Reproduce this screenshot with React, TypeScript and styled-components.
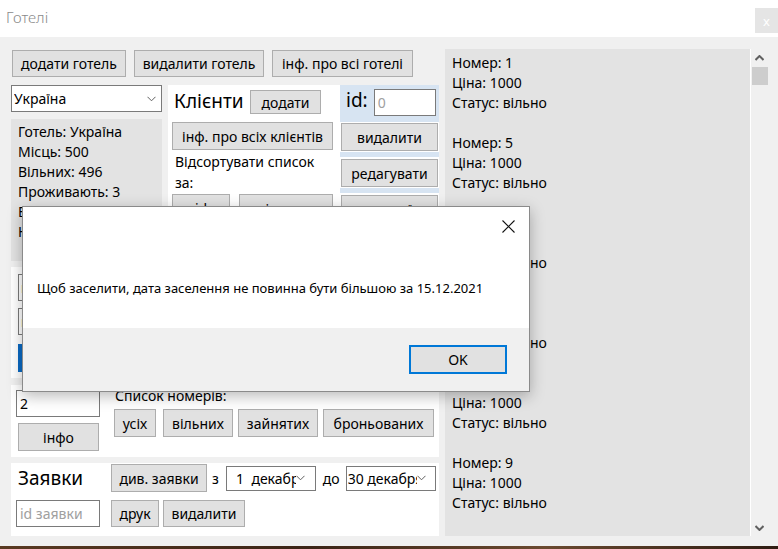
import React from "react";
import styled, { createGlobalStyle } from "styled-components";

const Global = createGlobalStyle`
  html, body { margin: 0; padding: 0; background: #f0f0f0; }
  body { font-family: "Noto Sans", "Open Sans", sans-serif; }
  * { box-sizing: border-box; }
`;

const Window = styled.div`
  position: relative;
  width: 778px;
  height: 549px;
  overflow: hidden;
  display: flex;
  flex-direction: column;
  background: #f0f0f0;
  color: #000;
  font-family: "Noto Sans", "Open Sans", sans-serif;
  font-size: 14px;
`;

const TitleBar = styled.div`
  height: 37px;
  flex-shrink: 0;
  background: #fff;
  display: flex;
  justify-content: space-between;
  align-items: flex-start;
`;

const Title = styled.div`
  padding: 7px 0 0 6px;
  font-size: 15px;
  font-weight: 300;
  color: #8a8a8a;
`;

const CloseBox = styled.div`
  margin-top: 8px;
  width: 23px;
  height: 25px;
  background: #e5e5e5;
  color: #fff;
  font-size: 13px;
  display: flex;
  align-items: center;
  justify-content: center;
`;

const Body = styled.div`
  flex: 1;
  display: flex;
  gap: 6px;
  padding-left: 11px;
  min-height: 0;
`;

const LeftCol = styled.div`
  width: 428px;
  display: flex;
  flex-direction: column;
  padding-top: 13px;
`;

const Toolbar = styled.div`
  display: flex;
  gap: 8px;
  padding-left: 1px;
  height: 27px;
`;

const Btn = styled.button<{ $w?: number; $h?: number; $ml?: number }>`
  width: ${(p) => (p.$w ? `${p.$w}px` : "auto")};
  height: ${(p) => p.$h ?? 28}px;
  margin-left: ${(p) => p.$ml ?? 0}px;
  padding: 0 6px;
  background: #e1e1e1;
  border: 1px solid #adadad;
  font-family: inherit;
  font-size: 14px;
  color: #000;
  white-space: nowrap;
  overflow: hidden;
  flex-shrink: 0;
`;

const MidRow = styled.div`
  margin-top: 8px;
  display: flex;
  gap: 6px;
  height: 176px;
`;

const HotelCol = styled.div`
  width: 151px;
  display: flex;
  flex-direction: column;
  gap: 7px;
`;

const Combo = styled.div<{ $w: number; $h?: number; $pad?: number }>`
  width: ${(p) => p.$w}px;
  height: ${(p) => p.$h ?? 27}px;
  background: #fff;
  border: 1px solid #7a7a7a;
  display: flex;
  align-items: center;
  padding-left: ${(p) => p.$pad ?? 2}px;
  font-size: 14px;
  white-space: pre;
  overflow: hidden;
  flex-shrink: 0;
`;

const ComboText = styled.span`
  flex: 1;
  overflow: hidden;
`;

const ChevronBox = styled.span<{ $w?: number }>`
  width: ${(p) => p.$w ?? 17}px;
  flex-shrink: 0;
  display: flex;
  align-items: center;
  justify-content: flex-start;
`;

const GrayInfo = styled.div`
  flex: 1;
  background: #e3e3e3;
  padding: 3px 7px;
  line-height: 20px;
  font-size: 14px;
  overflow: hidden;
`;

const ClientsPanel = styled.div`
  width: 271px;
  background: #fff;
  display: flex;
`;

const ClientsMain = styled.div`
  width: 172px;
  display: flex;
  flex-direction: column;
  padding-left: 4px;
`;

const HeaderRow = styled.div`
  height: 37px;
  display: flex;
  align-items: flex-start;
`;

const BigLabel = styled.span<{ $pt?: number; $w?: number }>`
  font-size: 19px;
  line-height: 28px;
  width: ${(p) => (p.$w ? `${p.$w}px` : "auto")};
  padding-top: ${(p) => p.$pt ?? 2}px;
  padding-left: 2px;
  flex-shrink: 0;
`;

const HeaderBtnWrap = styled.div`
  padding-top: 5px;
`;

const SortText = styled.div`
  width: 160px;
  padding: 0 0 0 3px;
  margin-top: 1px;
  line-height: 21px;
  font-size: 14px;
  height: 43px;
`;

const BtnRow = styled.div<{ $gap?: number }>`
  display: flex;
  gap: ${(p) => p.$gap ?? 9}px;
`;

const IdCol = styled.div`
  width: 99px;
  display: flex;
  flex-direction: column;
`;

const IdRow = styled.div`
  height: 37px;
  background: #d7e4f2;
  display: flex;
  align-items: flex-start;
  gap: 6px;
  padding: 0 0 0 4px;
`;

const IdInputWrap = styled.div`
  padding-top: 4px;
`;

const Input = styled.div<{ $w: number; $h?: number; $ph?: boolean }>`
  width: ${(p) => p.$w}px;
  height: ${(p) => p.$h ?? 27}px;
  background: #fff;
  border: 1px solid #7a7a7a;
  padding-left: 3px;
  display: flex;
  align-items: center;
  font-size: 14px;
  color: ${(p) => (p.$ph ? "#a0a0a0" : "#000")};
  flex-shrink: 0;
`;

const Strip = styled.div`
  height: 5px;
  margin: 1px 0 1px;
  background: #d7e4f2;
`;

const IdBtnWrap = styled.div`
  padding-left: 1px;
  margin-top: 1px;
`;

const Panel = styled.div<{ $h: number; $mt: number }>`
  height: ${(p) => p.$h}px;
  margin-top: ${(p) => p.$mt}px;
  background: #fff;
  display: flex;
  flex-shrink: 0;
`;

const SettleCol = styled.div`
  display: flex;
  flex-direction: column;
  gap: 7px;
  padding: 7px 0 0 7px;
`;

const SettleRight = styled.div`
  display: flex;
  flex-direction: column;
  gap: 7px;
  padding: 7px 0 0 12px;
  font-size: 14px;
`;

const BlueBtn = styled.div`
  width: 82px;
  height: 28px;
  margin-top: 2px;
  background: #0a6ac4;
  color: #fff;
  font-size: 14px;
  display: flex;
  align-items: center;
  justify-content: center;
`;

const RoomLeft = styled.div`
  display: flex;
  flex-direction: column;
  gap: 6px;
  padding: 5px 0 0 5px;
  width: 100px;
`;

const RoomRight = styled.div`
  display: flex;
  flex-direction: column;
  padding: 1px 0 0 3px;
`;

const SmallLabel = styled.div`
  font-size: 14px;
  line-height: 20px;
  height: 23px;
  padding-left: 1px;
`;

const OrdersPanel = styled.div`
  display: flex;
  flex-direction: column;
  padding: 1px 0 0 5px;
  gap: 8px;
`;

const OrdersRow = styled.div`
  display: flex;
  align-items: center;
`;

const OrdersLead = styled.div`
  width: 95px;
  display: flex;
  align-items: center;
`;

const Word = styled.span<{ $ml: number; $mr: number }>`
  margin: 0 ${(p) => p.$mr}px 0 ${(p) => p.$ml}px;
  font-size: 14px;
`;

const RightCol = styled.div`
  display: flex;
  padding: 12px 0 10px 0;
`;

const ListBox = styled.div`
  width: 306px;
  background: #e3e3e3;
  padding: 4px 7px;
  line-height: 20px;
  font-size: 14px;
  overflow: hidden;
  border-right: 1px solid #fff;
`;

const Entry = styled.div`
  margin-bottom: 20px;
`;

const Scrollbar = styled.div`
  width: 17px;
  background: #f0f0f0;
  display: flex;
  flex-direction: column;
  align-items: center;
`;

const ScrollArrow = styled.div`
  height: 17px;
  display: flex;
  align-items: center;
  justify-content: center;
`;

const Thumb = styled.div`
  width: 16px;
  height: 18px;
  margin-top: 1px;
  background: #cdcdcd;
`;

const ScrollSpacer = styled.div`
  flex: 1;
`;

const DesktopStrip = styled.div`
  height: 3px;
  flex-shrink: 0;
  background: linear-gradient(90deg, #5a3a22, #3b2416 40%, #6b4a30 70%, #2e1c12);
`;

/* message box overlay */
const Dialog = styled.div`
  position: absolute;
  left: 22px;
  top: 206px;
  width: 508px;
  height: 186px;
  background: #f0f0f0;
  border: 1px solid #8a8a8a;
  box-shadow: 0 4px 14px rgba(0, 0, 0, 0.28);
  display: flex;
  flex-direction: column;
`;

const DialogTop = styled.div`
  height: 121px;
  background: #fff;
  display: flex;
  flex-direction: column;
`;

const DialogClose = styled.div`
  align-self: flex-end;
  height: 38px;
  width: 42px;
  display: flex;
  align-items: center;
  justify-content: center;
`;

const DialogMsg = styled.div`
  padding: 33px 0 0 14px;
  font-size: 13px;
  line-height: 20px;
  white-space: nowrap;
`;

const DialogFooter = styled.div`
  flex: 1;
  display: flex;
  justify-content: flex-end;
  padding: 17px 22px 0 0;
`;

const OkBtn = styled.div`
  width: 98px;
  height: 29px;
  border: 2px solid #0078d7;
  background: #e1e1e1;
  font-size: 14px;
  display: flex;
  align-items: center;
  justify-content: center;
`;

const Chevron = ({ color = "#606060" }: { color?: string }) => (
  <svg width="9" height="6" viewBox="0 0 9 6">
    <path d="M0.5 0.8 L4.5 4.8 L8.5 0.8" fill="none" stroke={color} strokeWidth="1" />
  </svg>
);

const ArrowUp = () => (
  <svg width="9" height="6" viewBox="0 0 9 6">
    <path d="M0.5 5 L4.5 1 L8.5 5" fill="none" stroke="#606060" strokeWidth="2" />
  </svg>
);

const ArrowDown = () => (
  <svg width="9" height="6" viewBox="0 0 9 6">
    <path d="M0.5 1 L4.5 5 L8.5 1" fill="none" stroke="#606060" strokeWidth="2" />
  </svg>
);

const rooms = [
  { n: 1, p: 1000, s: "вільно" },
  { n: 5, p: 1000, s: "вільно" },
  { n: 6, p: 1000, s: "вільно" },
  { n: 7, p: 1000, s: "вільно" },
  { n: 8, p: 1000, s: "вільно" },
  { n: 9, p: 1000, s: "вільно" },
  { n: 10, p: 1000, s: "вільно" },
];

export default function App() {
  return (
    <>
      <Global />
      <Window>
        <TitleBar>
          <Title>Готелі</Title>
          <CloseBox>x</CloseBox>
        </TitleBar>
        <Body>
          <LeftCol>
            <Toolbar>
              <Btn $w={114} $h={27}>додати готель</Btn>
              <Btn $w={130} $h={27}>видалити готель</Btn>
              <Btn $w={141} $h={27}>інф. про всі готелі</Btn>
            </Toolbar>
            <MidRow>
              <HotelCol>
                <Combo $w={151}>
                  <ComboText>Україна</ComboText>
                  <ChevronBox $w={14}>
                    <Chevron />
                  </ChevronBox>
                </Combo>
                <GrayInfo>
                  <div>Готель: Україна</div>
                  <div>Місць: 500</div>
                  <div>Вільних: 496</div>
                  <div>Проживають: 3</div>
                  <div>Бронюють: 1</div>
                  <div>Недоступних: 0</div>
                </GrayInfo>
              </HotelCol>
              <ClientsPanel>
                <ClientsMain>
                  <HeaderRow>
                    <BigLabel $w={78}>Клієнти</BigLabel>
                    <HeaderBtnWrap>
                      <Btn $w={71} $h={24}>додати</Btn>
                    </HeaderBtnWrap>
                  </HeaderRow>
                  <Btn $w={161} $h={28}>інф. про всіх клієнтів</Btn>
                  <SortText>Відсортувати список за:</SortText>
                  <BtnRow>
                    <Btn $w={58}>id</Btn>
                    <Btn $w={94}>прізвищем</Btn>
                  </BtnRow>
                </ClientsMain>
                <IdCol>
                  <IdRow>
                    <BigLabel $pt={1}>id:</BigLabel>
                    <IdInputWrap>
                      <Input $w={62} $ph>0</Input>
                    </IdInputWrap>
                  </IdRow>
                  <IdBtnWrap>
                    <Btn $w={97}>видалити</Btn>
                  </IdBtnWrap>
                  <Strip />
                  <IdBtnWrap>
                    <Btn $w={97}>редагувати</Btn>
                  </IdBtnWrap>
                  <Strip />
                  <IdBtnWrap>
                    <Btn $w={97}>датою заїзду</Btn>
                  </IdBtnWrap>
                </IdCol>
              </ClientsPanel>
            </MidRow>

            <Panel $h={111} $mt={6}>
              <SettleCol>
                <Combo $w={82} $h={27}>
                  <ComboText>клієнт</ComboText>
                </Combo>
                <Combo $w={82} $h={27}>
                  <ComboText>номер</ComboText>
                </Combo>
                <BlueBtn>заселити</BlueBtn>
              </SettleCol>
              <SettleRight>
                <div>Дата заселення</div>
                <Combo $w={150} $h={25}>
                  <ComboText>15 декабря 2021 г.</ComboText>
                  <ChevronBox>
                    <Chevron />
                  </ChevronBox>
                </Combo>
              </SettleRight>
            </Panel>

            <Panel $h={72} $mt={7}>
              <RoomLeft>
                <Input $w={84}>2</Input>
                <Btn $w={81} $ml={2}>інфо</Btn>
              </RoomLeft>
              <RoomRight>
                <SmallLabel>Список номерів:</SmallLabel>
                <BtnRow $gap={5}>
                  <Btn $w={42}>усіх</Btn>
                  <Btn $w={70} $ml={2}>вільних</Btn>
                  <Btn $w={80}>зайнятих</Btn>
                  <Btn $w={111}>броньованих</Btn>
                </BtnRow>
              </RoomRight>
            </Panel>

            <Panel $h={73} $mt={6}>
              <OrdersPanel>
                <OrdersRow>
                  <OrdersLead>
                    <BigLabel $pt={0}>Заявки</BigLabel>
                  </OrdersLead>
                  <Btn $w={96}>див. заявки</Btn>
                  <Word $ml={5} $mr={7}>з</Word>
                  <Combo $w={90} $h={25} $pad={2}>
                    <ComboText>{"  1  декабря 2021 г."}</ComboText>
                    <ChevronBox $w={19}>
                      <Chevron />
                    </ChevronBox>
                  </Combo>
                  <Word $ml={7} $mr={6}>до</Word>
                  <Combo $w={90} $h={25} $pad={1}>
                    <ComboText>30 декабря 2021 г.</ComboText>
                    <ChevronBox $w={18}>
                      <Chevron />
                    </ChevronBox>
                  </Combo>
                </OrdersRow>
                <OrdersRow>
                  <OrdersLead>
                    <Input $w={84} $ph>id заявки</Input>
                  </OrdersLead>
                  <Btn $w={48} $h={27}>друк</Btn>
                  <Btn $w={82} $h={27} $ml={4}>видалити</Btn>
                </OrdersRow>
              </OrdersPanel>
            </Panel>
          </LeftCol>

          <RightCol>
            <ListBox>
              {rooms.map((r) => (
                <Entry key={r.n}>
                  <div>Номер: {r.n}</div>
                  <div>Ціна: {r.p}</div>
                  <div>Статус: {r.s}</div>
                </Entry>
              ))}
            </ListBox>
            <Scrollbar>
              <ScrollArrow>
                <ArrowUp />
              </ScrollArrow>
              <Thumb />
              <ScrollSpacer />
              <ScrollArrow>
                <ArrowDown />
              </ScrollArrow>
            </Scrollbar>
          </RightCol>
        </Body>
        <DesktopStrip />

        <Dialog>
          <DialogTop>
            <DialogClose>
              <svg width="13" height="13" viewBox="0 0 13 13">
                <path d="M0.5 0.5 L12.5 12.5 M12.5 0.5 L0.5 12.5" stroke="#111" strokeWidth="1.1" />
              </svg>
            </DialogClose>
            <DialogMsg>Щоб заселити, дата заселення не повинна бути більшою за 15.12.2021</DialogMsg>
          </DialogTop>
          <DialogFooter>
            <OkBtn>OK</OkBtn>
          </DialogFooter>
        </Dialog>
      </Window>
    </>
  );
}
